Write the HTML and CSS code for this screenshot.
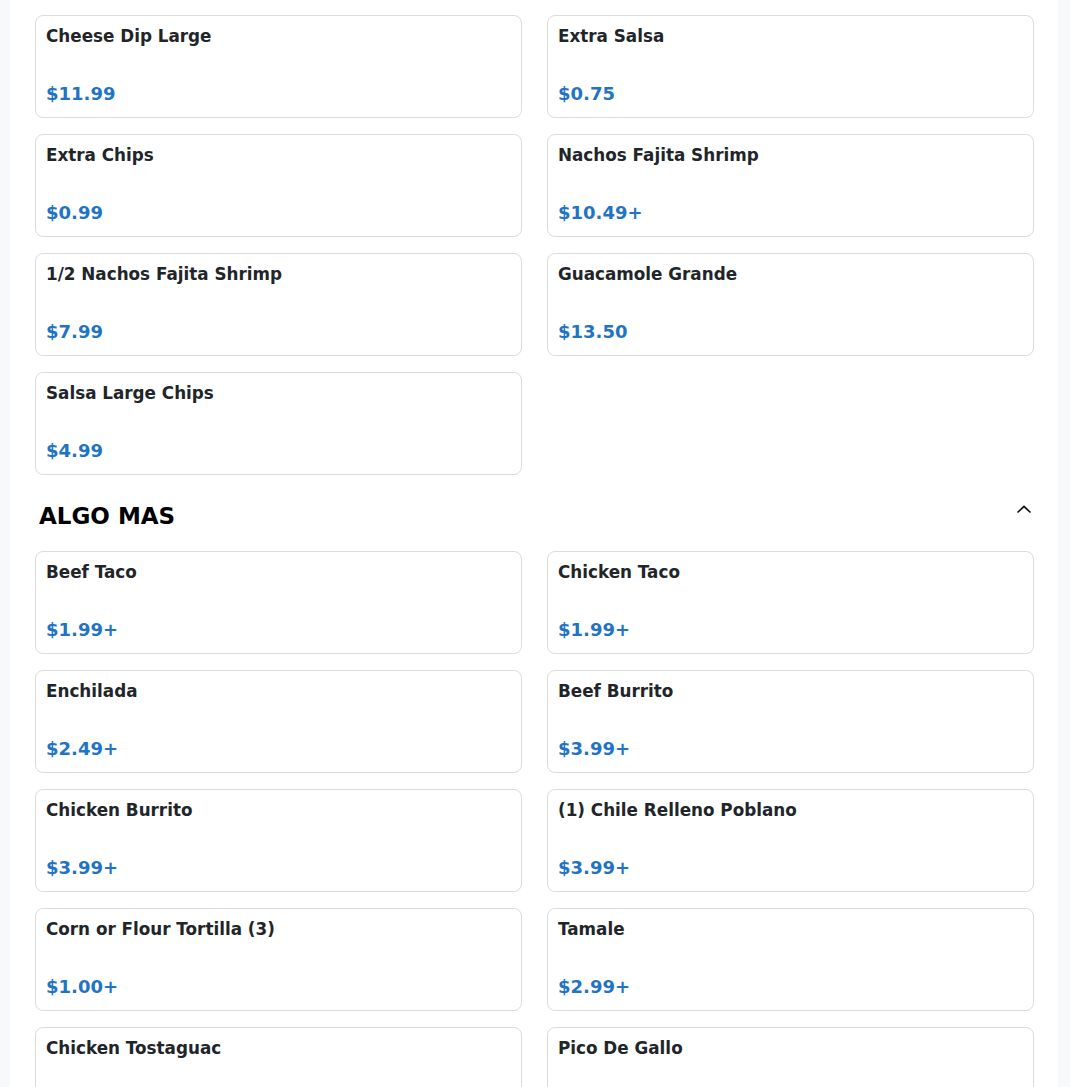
FILE: index.html
```html
<!DOCTYPE html>
<html lang="en">
<head>
<meta charset="utf-8">
<title>Menu</title>
<link rel="stylesheet" href="styles.css">
</head>
<body>
<main class="page">
  <section class="section">
    <div class="grid">
      <div class="card"><div class="name">Cheese Dip Large</div><div class="price">$11.99</div></div>
      <div class="card"><div class="name">Extra Salsa</div><div class="price">$0.75</div></div>
      <div class="card"><div class="name">Extra Chips</div><div class="price">$0.99</div></div>
      <div class="card"><div class="name">Nachos Fajita Shrimp</div><div class="price">$10.49+</div></div>
      <div class="card"><div class="name">1/2 Nachos Fajita Shrimp</div><div class="price">$7.99</div></div>
      <div class="card"><div class="name">Guacamole Grande</div><div class="price">$13.50</div></div>
      <div class="card"><div class="name">Salsa Large Chips</div><div class="price">$4.99</div></div>
    </div>
  </section>
  <section class="section">
    <div class="section-head">
      <h2 class="section-title">ALGO MAS</h2>
      <svg class="chevron" width="16" height="9" viewBox="0 0 16 9" aria-hidden="true"><path d="M1.5 7.5 L8 1.5 L14.5 7.5" fill="none" stroke="#111" stroke-width="1.7"/></svg>
    </div>
    <div class="grid">
      <div class="card"><div class="name">Beef Taco</div><div class="price">$1.99+</div></div>
      <div class="card"><div class="name">Chicken Taco</div><div class="price">$1.99+</div></div>
      <div class="card"><div class="name">Enchilada</div><div class="price">$2.49+</div></div>
      <div class="card"><div class="name">Beef Burrito</div><div class="price">$3.99+</div></div>
      <div class="card"><div class="name">Chicken Burrito</div><div class="price">$3.99+</div></div>
      <div class="card"><div class="name">(1) Chile Relleno Poblano</div><div class="price">$3.99+</div></div>
      <div class="card"><div class="name">Corn or Flour Tortilla (3)</div><div class="price">$1.00+</div></div>
      <div class="card"><div class="name">Tamale</div><div class="price">$2.99+</div></div>
      <div class="card"><div class="name">Chicken Tostaguac</div><div class="price">$2.99+</div></div>
      <div class="card"><div class="name">Pico De Gallo</div><div class="price">$1.99+</div></div>
    </div>
  </section>
</main>
</body>
</html>
```
FILE: styles.css
```css
html, body {
  margin: 0;
  padding: 0;
}
body {
  background: #f8f9fa;
  font-family: "DejaVu Sans", sans-serif;
  color: #212529;
}
.page {
  width: 1048px;
  margin-left: 10px;
  background: #fff;
  padding: 15px 24px 0 25px;
  box-sizing: border-box;
  min-height: 1087px;
}
.grid {
  display: grid;
  grid-template-columns: 487px 487px;
  column-gap: 25px;
  row-gap: 16px;
}
.card {
  border: 1px solid #dcdcdc;
  border-radius: 8px;
  padding: 10px;
  height: 103px;
  box-sizing: border-box;
}
.name {
  font-size: 16.8px;
  font-weight: bold;
  line-height: 20px;
  color: #212529;
}
.price {
  margin-top: 36px;
  font-size: 18px;
  font-weight: bold;
  line-height: 24px;
  color: #1f74c4;
}
.section-head {
  display: flex;
  align-items: center;
  justify-content: space-between;
  padding: 27px 2px 21px 4px;
}
.section-title {
  margin: 0;
  font-size: 23px;
  line-height: 28px;
  font-weight: bold;
  color: #000;
}
.chevron {
  display: block;
  margin-top: -14px;
}
```
